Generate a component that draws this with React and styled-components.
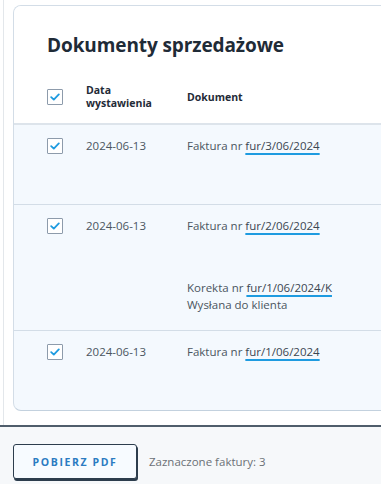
import React from "react";
import styled, { createGlobalStyle } from "styled-components";

const GlobalStyle = createGlobalStyle`
  html, body {
    margin: 0;
    padding: 0;
    background: #ffffff;
    overflow: hidden;
  }
  body {
    font-family: "Open Sans", "Noto Sans", sans-serif;
    color: #4a5560;
  }
`;

const invoices = [
  { id: 1, date: "2024-06-13", number: "fur/3/06/2024" },
  {
    id: 2,
    date: "2024-06-13",
    number: "fur/2/06/2024",
    correction: { number: "fur/1/06/2024/K", status: "Wysłana do klienta" },
  },
  { id: 3, date: "2024-06-13", number: "fur/1/06/2024" },
];

export default function App() {
  return (
    <>
      <GlobalStyle />
      <Page>
        <Main>
          <Card>
            <Title>Dokumenty sprzedażowe</Title>
            <HeadRow>
              <CheckCell>
                <Checkbox />
              </CheckCell>
              <DateCell $head>Data<br />wystawienia</DateCell>
              <DocCell $head>Dokument</DocCell>
            </HeadRow>
            {invoices.map((inv, i) => (
              <Row key={inv.id} $last={i === invoices.length - 1}>
                <CheckCell>
                  <Checkbox />
                </CheckCell>
                <DateCell>{inv.date}</DateCell>
                <DocCell>
                  <Line>
                    Faktura nr <DocLink>{inv.number}</DocLink>
                  </Line>
                  <Extra $filled={!!inv.correction}>
                    {inv.correction && (
                      <>
                        <Line>
                          Korekta nr <DocLink>{inv.correction.number}</DocLink>
                        </Line>
                        <Line>{inv.correction.status}</Line>
                      </>
                    )}
                  </Extra>
                </DocCell>
              </Row>
            ))}
          </Card>
        </Main>
        <Footer>
          <Button>POBIERZ PDF</Button>
          <Selected>Zaznaczone faktury: 3</Selected>
        </Footer>
      </Page>
    </>
  );
}

function Checkbox() {
  return (
    <Box>
      <svg width="10" height="8" viewBox="0 0 10 8">
        <path
          d="M1.2 4.2 L3.8 6.6 L8.8 1.4"
          fill="none"
          stroke="#1e9be0"
          strokeWidth="1.8"
          strokeLinecap="round"
          strokeLinejoin="round"
        />
      </svg>
    </Box>
  );
}

const Page = styled.div`
  display: flex;
  flex-direction: column;
  height: 484px;
`;

const Main = styled.div`
  margin-left: 3px;
  border-left: 1px solid #e3e7eb;
  padding: 5px 0 14px 9px;
`;

const Card = styled.div`
  width: 420px;
  border: 1px solid #d3dde7;
  border-bottom-color: #c3d1de;
  border-radius: 8px;
  background: #f4f9fe;
  overflow: hidden;
`;

const Title = styled.h2`
  margin: 0;
  padding: 26px 0 0 33px;
  height: 52px;
  box-sizing: border-box;
  background: #ffffff;
  font-size: 19px;
  font-weight: 700;
  color: #1f2b37;
  letter-spacing: -0.1px;
  line-height: 26px;
`;

const HeadRow = styled.div`
  display: flex;
  align-items: center;
  height: 67px;
  box-sizing: border-box;
  padding-top: 12px;
  background: #ffffff;
  border-bottom: 2px solid #dde4eb;
`;

const Row = styled.div`
  display: flex;
  align-items: flex-start;
  padding: 13px 0 13px;
  border-bottom: ${(p) => (p.$last ? "none" : "1px solid #d3dde7")};
`;

const CheckCell = styled.div`
  width: 39px;
  padding-left: 33px;
  flex-shrink: 0;
  display: flex;
  align-items: center;
  height: 16px;
`;

const DateCell = styled.div`
  width: 101px;
  flex-shrink: 0;
  font-size: ${(p) => (p.$head ? "10.5px" : "11.5px")};
  font-weight: ${(p) => (p.$head ? 700 : 400)};
  color: ${(p) => (p.$head ? "#1f2b37" : "#4a5560")};
  line-height: ${(p) => (p.$head ? "13px" : "16px")};
`;

const DocCell = styled.div`
  flex: 1;
  font-size: ${(p) => (p.$head ? "10.5px" : "11.5px")};
  font-weight: ${(p) => (p.$head ? 700 : 400)};
  color: ${(p) => (p.$head ? "#1f2b37" : "#4a5560")};
  line-height: 16px;
`;

const Line = styled.div`
  line-height: 16px;
  height: 16px;
  white-space: nowrap;
  & + & {
    margin-top: 1px;
  }
`;

const Extra = styled.div`
  min-height: 37px;
  padding-top: ${(p) => (p.$filled ? "46px" : "0")};
`;

const DocLink = styled.span`
  color: #3b4651;
  text-decoration: underline;
  text-decoration-color: #1e9be0;
  text-decoration-thickness: 1.5px;
  text-underline-offset: 3px;
`;

const Box = styled.span`
  width: 16px;
  height: 16px;
  box-sizing: border-box;
  border: 1px solid #8d9bab;
  border-radius: 1px;
  background: #ffffff;
  display: inline-flex;
  align-items: center;
  justify-content: center;
`;

const Footer = styled.div`
  flex: 1;
  display: flex;
  align-items: flex-start;
  gap: 12px;
  padding: 17px 0 0 13px;
  background: #f6f8fa;
  border-top: 2px solid #4f5d6b;
`;

const Button = styled.button`
  width: 124px;
  height: 35px;
  box-sizing: border-box;
  border: 1px solid #2d3d4d;
  border-radius: 3px;
  box-shadow: 1px 2px 0 #2d3d4d;
  background: #f7fbff;
  color: #2b7bc2;
  font-family: "Open Sans", "Noto Sans", sans-serif;
  font-size: 10.5px;
  font-weight: 700;
  letter-spacing: 1.6px;
  cursor: pointer;
  padding: 0;
`;

const Selected = styled.span`
  line-height: 35px;
  font-size: 11.5px;
  color: #6b7076;
`;
